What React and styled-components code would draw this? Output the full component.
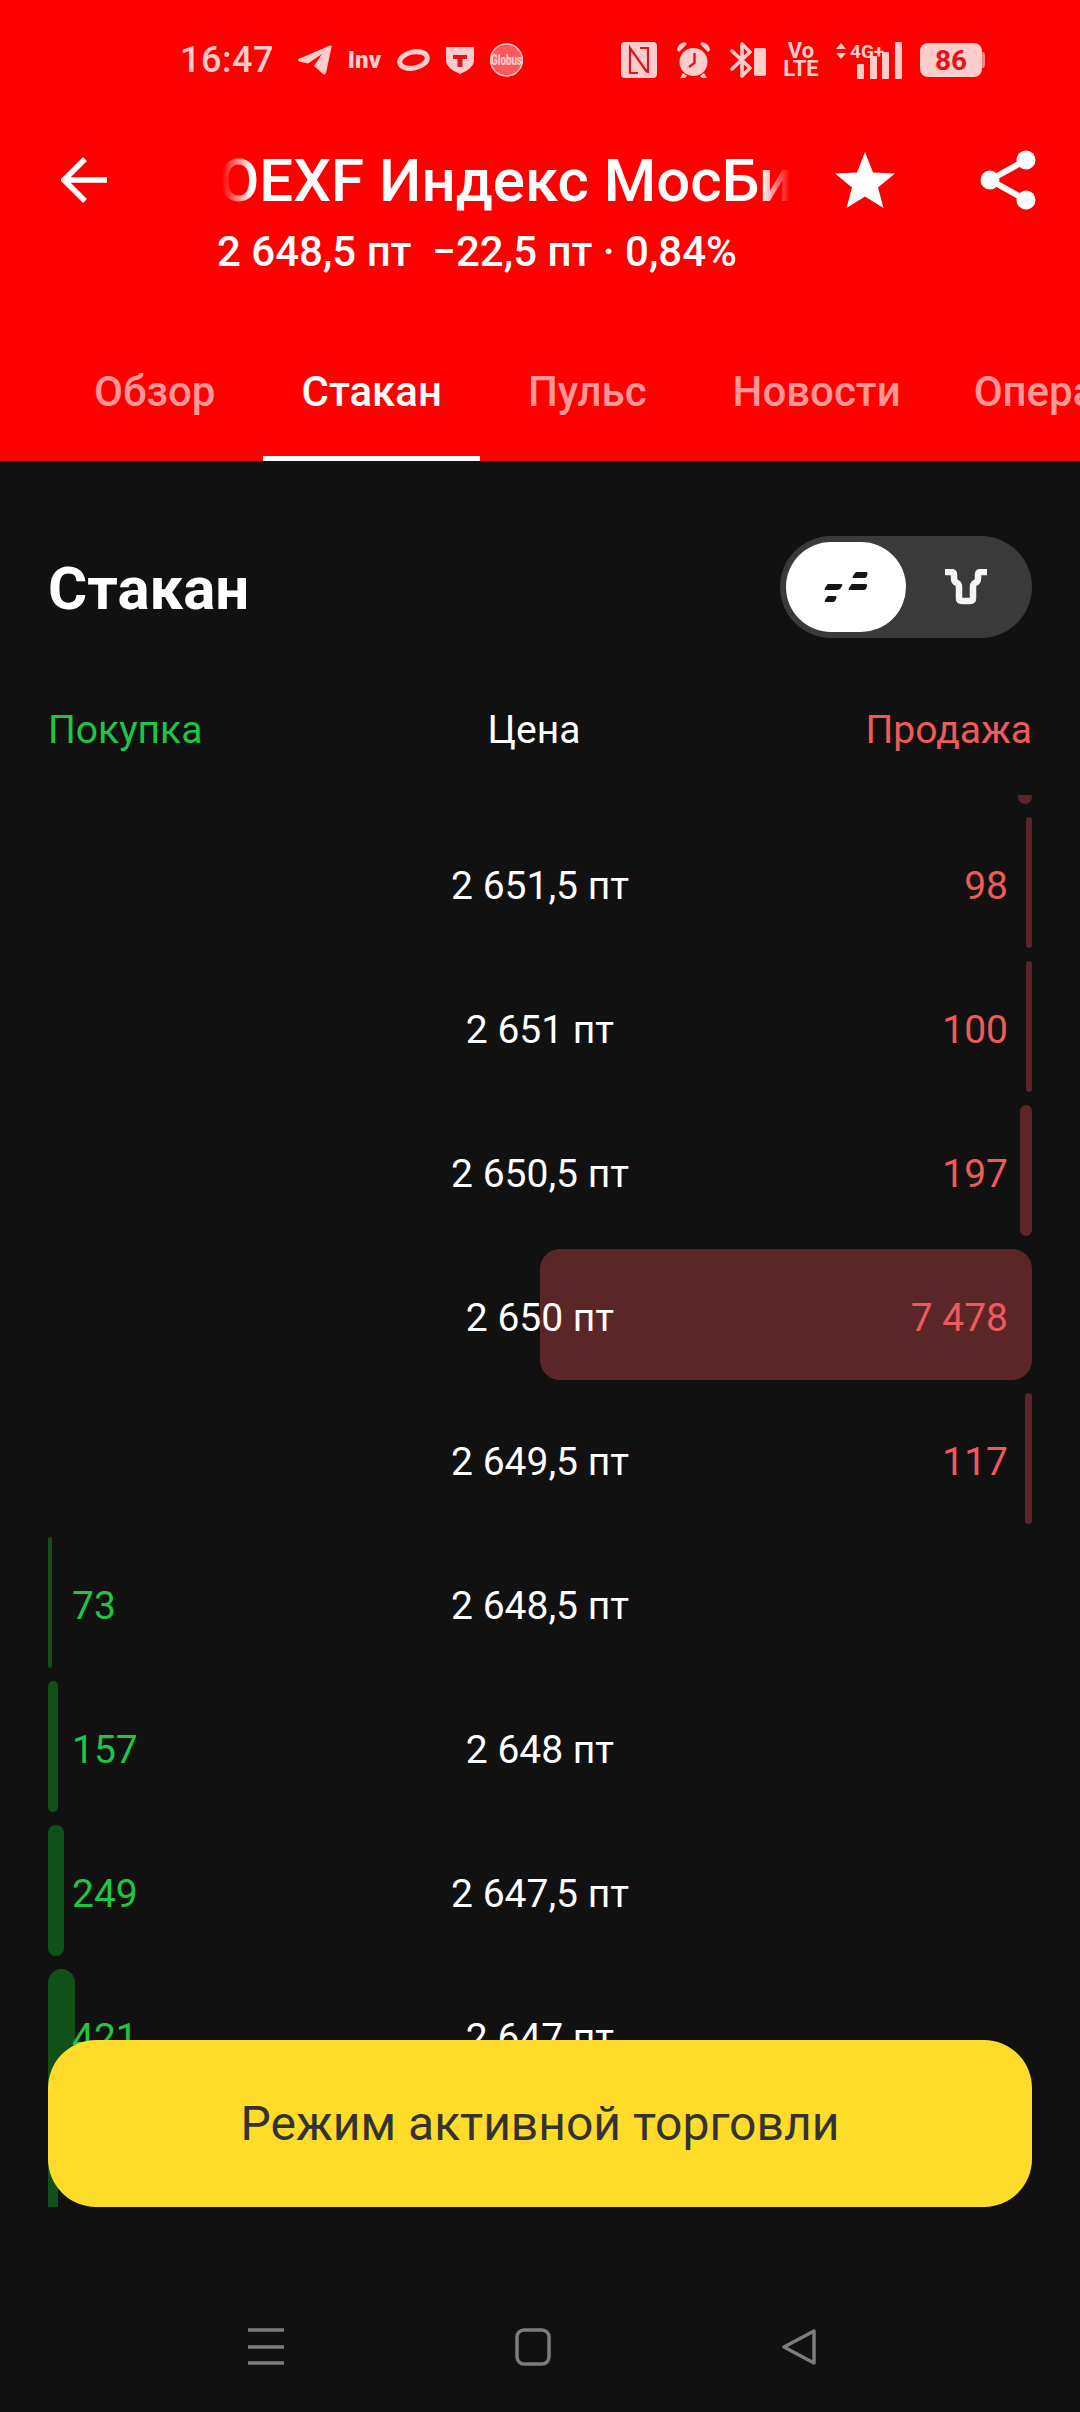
import React from 'react';
import styled, { createGlobalStyle } from 'styled-components';

const GlobalStyle = createGlobalStyle`
  html, body {
    margin: 0;
    padding: 0;
    background: #111112;
    font-family: Roboto, "Liberation Sans", sans-serif;
  }
  * {
    box-sizing: border-box;
  }
`;

const RED = '#ee5b5b';
const GREEN = '#1fc544';
const TINT = '#ffcccc';

const Page = styled.div`
  width: 1080px;
  height: 2412px;
  display: flex;
  flex-direction: column;
  overflow: hidden;
  background: #111112;
  color: #fff;
`;

const Header = styled.header`
  height: 461px;
  flex: none;
  display: flex;
  flex-direction: column;
  background: #ff0000;
`;

const StatusBar = styled.div`
  height: 120px;
  flex: none;
  display: flex;
  align-items: center;
  padding: 0 95px 0 180px;
  color: ${TINT};
`;

const StatusLeft = styled.div`
  display: flex;
  align-items: center;
  gap: 16px;
`;

const StatusRight = styled.div`
  display: flex;
  align-items: center;
  gap: 18px;
  margin-left: auto;
`;

const Clock = styled.span`
  font-size: 36px;
  font-weight: 500;
  letter-spacing: 0.5px;
  margin-right: 8px;
`;

const InvMark = styled.span`
  width: 33px;
  font-size: 24px;
  font-weight: 900;
  white-space: nowrap;
`;

const VoLte = styled.span`
  width: 34px;
  display: flex;
  flex-direction: column;
  align-items: center;
  font-size: 22px;
  line-height: 18px;
  font-weight: 700;
`;

const Battery = styled.span`
  position: relative;
  width: 62px;
  height: 34px;
  margin-right: 3px;
  border-radius: 8px;
  display: flex;
  align-items: center;
  justify-content: center;
  background: ${TINT};
  color: #e0141c;
  font-size: 28px;
  font-weight: 700;
  &::after {
    content: '';
    position: absolute;
    left: 62px;
    top: 9px;
    width: 3px;
    height: 16px;
    border-radius: 0 3px 3px 0;
    background: #ff8080;
  }
`;

const TitleRow = styled.div`
  height: 106px;
  flex: none;
  margin-top: 7px;
  display: flex;
  align-items: center;
  padding-left: 61px;
`;

const BackSlot = styled.div`
  width: 161px;
  flex: none;
  display: flex;
  align-items: center;
`;

const Title = styled.div`
  width: 568px;
  flex: none;
  overflow: hidden;
  white-space: nowrap;
  text-indent: -4px;
  font-size: 60px;
  font-weight: 500;
  -webkit-mask-image: linear-gradient(90deg, transparent 0, #000 30px, #000 540px, transparent 568px);
  mask-image: linear-gradient(90deg, transparent 0, #000 30px, #000 540px, transparent 568px);
`;

const StarSlot = styled.div`
  margin-left: 45px;
  display: flex;
`;

const ShareSlot = styled.div`
  margin-left: 85px;
  display: flex;
`;

const PriceLine = styled.div`
  padding-left: 217px;
  font-size: 42px;
  font-weight: 500;
  line-height: 38px;
  white-space: pre;
`;

const Tabs = styled.nav`
  margin-top: auto;
  height: 120px;
  flex: none;
  display: flex;
  gap: 10px;
  overflow: hidden;
  padding-left: 56px;
`;

const Tab = styled.div`
  position: relative;
  flex: none;
  padding: 0 38px 20px;
  height: 100%;
  display: flex;
  align-items: center;
  font-size: 42px;
  font-weight: 500;
  white-space: nowrap;
  color: ${({ $active }) => ($active ? '#fff' : 'rgba(255, 255, 255, 0.6)')};
  &:last-child {
    margin-left: -13px;
  }
  &::after {
    content: '';
    display: ${({ $active }) => ($active ? 'block' : 'none')};
    position: absolute;
    left: 0;
    right: 0;
    bottom: 0;
    height: 5px;
    background: #fff;
  }
`;

const Section = styled.section`
  padding: 75px 48px 0;
  flex: none;
`;

const SectionHead = styled.div`
  display: flex;
  align-items: center;
  justify-content: space-between;
`;

const SectionTitle = styled.h1`
  margin: 0;
  padding-top: 3px;
  font-size: 60px;
  font-weight: 700;
`;

const Toggle = styled.div`
  width: 252px;
  height: 102px;
  padding: 6px;
  border-radius: 51px;
  display: flex;
  align-items: center;
  background: #3a3a3a;
`;

const ToggleKnob = styled.div`
  width: 120px;
  height: 90px;
  border-radius: 45px;
  display: flex;
  align-items: center;
  justify-content: center;
  background: #fff;
`;

const ToggleOption = styled.div`
  flex: 1;
  display: flex;
  align-items: center;
  justify-content: center;
`;

const Columns = styled.div`
  display: flex;
  justify-content: space-between;
  margin-top: 70px;
  font-size: 39px;
  line-height: 44px;
`;

const ColumnLabel = styled.span`
  color: ${({ $color }) => $color};
`;

const Book = styled.div`
  position: relative;
  flex: none;
  height: 1412px;
  margin-top: 43px;
  padding: 0 48px;
  overflow: hidden;
`;

const BookRows = styled.div`
  margin-top: -122px;
  display: flex;
  flex-direction: column;
`;

const Row = styled.div`
  position: relative;
  height: 144px;
  flex: none;
  padding: 0 24px 7px;
  display: grid;
  grid-template-columns: 1fr auto 1fr;
  align-items: center;
  font-size: 39px;
`;

const Bar = styled.div`
  position: absolute;
  top: 0;
  height: 131px;
  ${({ $side }) => ($side === 'buy' ? 'left: 0;' : 'right: 0;')}
  border-radius: ${({ $rad }) => $rad}px;
  background: ${({ $side }) => ($side === 'buy' ? '#0f5119' : '#5a2627')};
`;

const Qty = styled.span`
  position: relative;
  color: ${({ $color }) => $color};
  text-align: ${({ $right }) => ($right ? 'right' : 'left')};
`;

const Price = styled.span`
  position: relative;
  color: #fff;
  text-align: center;
  white-space: nowrap;
`;

const ActiveButton = styled.button`
  position: absolute;
  left: 48px;
  right: 48px;
  bottom: 0;
  height: 167px;
  border: 0;
  border-radius: 48px;
  background: #ffdb2a;
  color: #333;
  font-family: inherit;
  font-size: 48px;
`;

const NavBar = styled.div`
  flex: 1;
  display: flex;
  align-items: flex-start;
  padding: 121px 263px 0 248px;
  justify-content: space-between;
`;

const rows = [
  { side: 'sell', w: 14 },
  { price: '2 651,5 пт', qty: '98', side: 'sell', w: 6 },
  { price: '2 651 пт', qty: '100', side: 'sell', w: 6 },
  { price: '2 650,5 пт', qty: '197', side: 'sell', w: 12 },
  { price: '2 650 пт', qty: '7 478', side: 'sell', w: 492 },
  { price: '2 649,5 пт', qty: '117', side: 'sell', w: 7 },
  { price: '2 648,5 пт', qty: '73', side: 'buy', w: 4 },
  { price: '2 648 пт', qty: '157', side: 'buy', w: 10 },
  { price: '2 647,5 пт', qty: '249', side: 'buy', w: 16 },
  { price: '2 647 пт', qty: '421', side: 'buy', w: 27 },
  { side: 'buy', w: 10 },
];

const tabs = ['Обзор', 'Стакан', 'Пульс', 'Новости', 'Операции'];

const TelegramIcon = () => (
  <svg width="34" height="30" viewBox="0 0 34 30">
    <path d="M0.5 14 L32 0.5 Q34 0 33.6 2 L28 28 Q27 30.5 25 29 L16 21 L24 9 L10 18.5 L1 16.5 Q-0.5 15 0.5 14Z" fill={TINT} />
  </svg>
);

const RingIcon = () => (
  <svg width="33" height="24" viewBox="0 0 33 24">
    <ellipse cx="16.5" cy="12" rx="14" ry="8" transform="rotate(-12 16.5 12)" fill="none" stroke={TINT} strokeWidth="5" />
  </svg>
);

const ShieldIcon = () => (
  <svg width="28" height="28" viewBox="0 0 28 28">
    <path d="M0 1 H28 V15 Q28 22 14 28 Q0 22 0 15Z" fill={TINT} />
    <path d="M7 9 H21 V13 H16.5 V21 H11.5 V13 H7Z" fill="#e0141c" />
  </svg>
);

const GlobusIcon = () => (
  <svg width="33" height="36" viewBox="0 0 33 36">
    <circle cx="16.5" cy="18" r="16" fill="#ff5a5a" stroke={TINT} strokeWidth="1.5" />
    <text x="16.5" y="23" textAnchor="middle" fontSize="15" fontWeight="900" fill={TINT} fontFamily="Roboto, sans-serif" textLength="31" lengthAdjust="spacingAndGlyphs">Globus</text>
  </svg>
);

const NfcIcon = () => (
  <svg width="36" height="36" viewBox="0 0 36 36">
    <rect width="36" height="36" rx="4" fill={TINT} />
    <path d="M17 31 H9 V6 L26 30 M19 6 H27 V31" fill="none" stroke="#e0141c" strokeWidth="2.2" />
  </svg>
);

const AlarmIcon = () => (
  <svg width="37" height="38" viewBox="0 0 37 38">
    <circle cx="18.5" cy="21" r="14" fill={TINT} />
    <path d="M2 9 Q3 2 10 1 L12 3 L4 11Z M35 9 Q34 2 27 1 L25 3 L33 11Z M8 32 L5 37 H10 L12 35Z M29 32 L32 37 H27 L25 35Z" fill={TINT} />
    <path d="M19.5 12 V22 L14 26" fill="none" stroke="#e0141c" strokeWidth="2.4" />
  </svg>
);

const BluetoothIcon = () => (
  <svg width="36" height="38" viewBox="0 0 36 38">
    <path d="M2 10 L20 27 L12 35 V3 L20 11 L2 28" fill="none" stroke={TINT} strokeWidth="3.6" strokeLinejoin="round" strokeLinecap="round" />
    <rect x="24" y="7" width="12" height="28" rx="2" fill={TINT} />
  </svg>
);

const SignalIcon = () => (
  <svg width="66" height="38" viewBox="0 0 66 38">
    <path d="M5 2 L10 8 H0Z M5 18 L10 12 H0Z" fill={TINT} />
    <text x="14" y="17" fontSize="19" fontWeight="700" fill={TINT} fontFamily="Roboto, sans-serif">4G+</text>
    <rect x="21" y="23" width="7" height="15" rx="1" fill={TINT} />
    <rect x="34" y="15" width="7" height="23" rx="1" fill={TINT} />
    <rect x="46" y="11" width="7" height="27" rx="1" fill={TINT} />
    <rect x="59" y="1" width="7" height="37" rx="1" fill={TINT} />
  </svg>
);

const BackIcon = () => (
  <svg width="48" height="46" viewBox="0 0 48 46">
    <path d="M46 23 H4 M24 2 L3 23 L24 44" fill="none" stroke="#fff" strokeWidth="5.5" />
  </svg>
);

const StarIcon = () => (
  <svg width="60" height="56" viewBox="0 0 60 56">
    <path d="M30 0 L38 20.5 L60 21.5 L43 35.5 L48.5 56 L30 44.5 L11.5 56 L17 35.5 L0 21.5 L22 20.5Z" fill="#fff" />
  </svg>
);

const ShareIcon = () => (
  <svg width="56" height="60" viewBox="0 0 56 60">
    <path d="M46 10 L10 30 L46 50" fill="none" stroke="#fff" strokeWidth="6" />
    <circle cx="46" cy="10" r="9.5" fill="#fff" />
    <circle cx="10" cy="30" r="9.5" fill="#fff" />
    <circle cx="46" cy="50" r="9.5" fill="#fff" />
  </svg>
);

const DashesIcon = () => (
  <svg width="44" height="30" viewBox="0 0 44 30">
    <path d="M4 12 H17 Q19 12 18 14 L16 17 Q15 18 13 18 H2 Q0 18 1 16 L3 13 Q3.5 12 4 12Z" fill="#151515" />
    <path d="M28 12 H41 Q44 12 43 14 L42 17 Q41 18 39 18 H26 Q24 18 25 16 L27 13 Q27.5 12 28 12Z" fill="#151515" />
    <path d="M33 0 H42 Q44 0 43.5 2 L42.5 5 Q42 6 40 6 H30 Q28 6 29 4 L31 1 Q31.5 0 33 0Z" fill="#151515" />
    <path d="M4 24 H11 Q13 24 12.5 26 L11 29 Q10.5 30 9 30 H2 Q0 30 1 28 L3 25 Q3.5 24 4 24Z" fill="#151515" />
  </svg>
);

const FunnelIcon = () => (
  <svg width="42" height="36" viewBox="0 0 42 36">
    <path d="M0 3 H6 Q9 3 9 6 V9 Q9 13 12 14 Q14 15 14 18 V29 Q14 32 17 32 H25 Q28 32 28 29 V18 Q28 15 30 14 Q33 13 33 9 V6 Q33 3 36 3 H42" fill="none" stroke="#f5f5f5" strokeWidth="6.5" />
  </svg>
);

const MenuIcon = () => (
  <svg width="36" height="38" viewBox="0 0 36 38">
    <path d="M0 2 H36 M0 19 H36 M0 35 H36" stroke="#7d7d7d" strokeWidth="3.5" />
  </svg>
);

const HomeIcon = () => (
  <svg width="36" height="38" viewBox="0 0 36 38">
    <rect x="2" y="2" width="32" height="34" rx="7" fill="none" stroke="#7d7d7d" strokeWidth="3.5" />
  </svg>
);

const TriangleIcon = () => (
  <svg width="36" height="38" viewBox="0 0 36 38">
    <path d="M33 3 V35 L3 19Z" fill="none" stroke="#7d7d7d" strokeWidth="3.5" strokeLinejoin="round" />
  </svg>
);

const App = () => {
  return (
    <Page>
      <GlobalStyle />
      <Header>
        <StatusBar>
          <StatusLeft>
            <Clock>16:47</Clock>
            <TelegramIcon />
            <InvMark>Inv</InvMark>
            <RingIcon />
            <ShieldIcon />
            <GlobusIcon />
          </StatusLeft>
          <StatusRight>
            <NfcIcon />
            <AlarmIcon />
            <BluetoothIcon />
            <VoLte>
              <span>Vo</span>
              <span>LTE</span>
            </VoLte>
            <SignalIcon />
            <Battery>86</Battery>
          </StatusRight>
        </StatusBar>
        <TitleRow>
          <BackSlot>
            <BackIcon />
          </BackSlot>
          <Title>OEXF Индекс МосБиржи</Title>
          <StarSlot>
            <StarIcon />
          </StarSlot>
          <ShareSlot>
            <ShareIcon />
          </ShareSlot>
        </TitleRow>
        <PriceLine>2 648,5 пт  −22,5 пт · 0,84%</PriceLine>
        <Tabs>
          {tabs.map((tab) => (
            <Tab key={tab} $active={tab === 'Стакан'}>
              {tab}
            </Tab>
          ))}
        </Tabs>
      </Header>

      <Section>
        <SectionHead>
          <SectionTitle>Стакан</SectionTitle>
          <Toggle>
            <ToggleKnob>
              <DashesIcon />
            </ToggleKnob>
            <ToggleOption>
              <FunnelIcon />
            </ToggleOption>
          </Toggle>
        </SectionHead>
        <Columns>
          <ColumnLabel $color={GREEN}>Покупка</ColumnLabel>
          <ColumnLabel $color="#fff">Цена</ColumnLabel>
          <ColumnLabel $color={RED}>Продажа</ColumnLabel>
        </Columns>
      </Section>

      <Book>
        <BookRows>
          {rows.map((row, i) => (
            <Row key={i}>
              <Bar $side={row.side} $rad={row.w > 30 ? 20 : row.w / 2} style={{ width: row.w }} />
              <Qty $color={GREEN}>{row.side === 'buy' ? row.qty : ''}</Qty>
              <Price>{row.price}</Price>
              <Qty $color={RED} $right>
                {row.side === 'sell' ? row.qty : ''}
              </Qty>
            </Row>
          ))}
        </BookRows>
        <ActiveButton>Режим активной торговли</ActiveButton>
      </Book>

      <NavBar>
        <MenuIcon />
        <HomeIcon />
        <TriangleIcon />
      </NavBar>
    </Page>
  );
};

export default App;
